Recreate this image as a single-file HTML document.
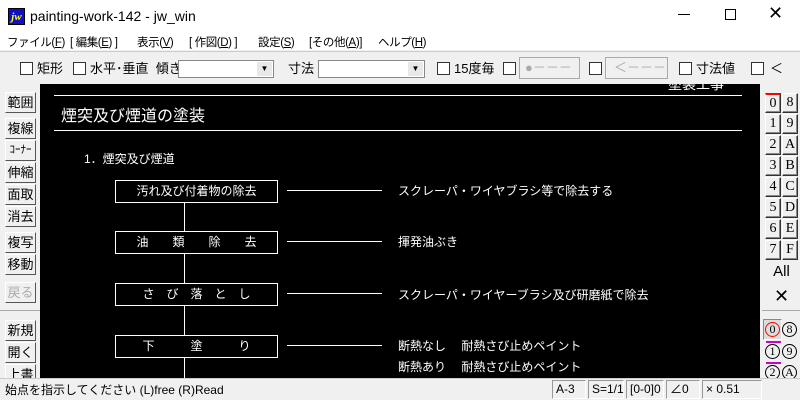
<!DOCTYPE html><html><head><meta charset="utf-8"><style>
*{margin:0;padding:0;box-sizing:border-box}
body{width:800px;height:400px;overflow:hidden;background:#f0f0f0;font-family:"Liberation Sans","Noto Sans CJK JP",sans-serif;font-size:12px;color:#000;position:relative}
.a{position:absolute;white-space:nowrap}
.m{position:absolute;top:34px;font-size:11.5px;letter-spacing:-0.4px;white-space:nowrap}
.cb{position:absolute;width:13px;height:13px;border:1px solid #333;background:#fff;top:62px}
.t{position:absolute;top:58px;font-size:13px;white-space:nowrap}
.btn{position:absolute;left:5px;width:31px;height:21px;background:#f0f0f0;border:1px solid;border-color:#fff #555 #555 #fff;font-size:13px;text-align:center;line-height:19px}
.lb{position:absolute;width:16px;height:20px;background:#f0f0f0;border:1px solid;border-color:#fff #333 #333 #fff;box-shadow:inset -1px -1px #888;font-family:"Liberation Serif",serif;font-size:14px;text-align:center;line-height:18px}
.w{color:#fff;position:absolute;white-space:nowrap}
.bx{position:absolute;left:115px;width:163px;height:23px;border:1px solid #fff;color:#fff;font-size:12px;text-align:center;line-height:21px}
.dl{position:absolute;left:287px;width:95px;height:0;border-top:1px solid #fff}
.ar{position:absolute;left:184px;width:1px;background:#fff}
.sb{position:absolute;top:380px;height:19px;border:1px solid;border-color:#999 #fff #fff #999;font-size:12px;line-height:17px;padding-left:3px}
.c{position:absolute;width:15px;height:15px;border:1px solid #000;border-radius:50%;font-family:"Liberation Serif",serif;font-size:12px;text-align:center;line-height:13px}
</style></head><body>
<div class="a" style="left:0;top:0;width:800px;height:32px;background:#fff"></div>
<div class="a" style="left:8px;top:8px;width:17px;height:17px;background:#1010c0;color:#ff0;font:bold italic 11px 'Liberation Serif',serif;line-height:17px;text-align:center;border:1px solid #000">jw</div>
<div class="a" style="left:30px;top:8px;font-size:14px">painting-work-142 - jw_win</div>
<div class="a" style="left:678px;top:14px;width:12px;border-top:1px solid #000"></div>
<div class="a" style="left:725px;top:9px;width:11px;height:11px;border:1px solid #000"></div>
<div class="a" style="left:768px;top:3px;font-size:18px;font-weight:300">✕</div>
<div class="a" style="left:0;top:32px;width:800px;height:18px;background:#fff"></div>
<div class="m" style="left:7px">ファイル(<u>F</u>)</div>
<div class="m" style="left:70px">[ 編集(<u>E</u>) ]</div>
<div class="m" style="left:137px">表示(<u>V</u>)</div>
<div class="m" style="left:189px">[ 作図(<u>D</u>) ]</div>
<div class="m" style="left:258px">設定(<u>S</u>)</div>
<div class="m" style="left:309px">[その他(<u>A</u>)]</div>
<div class="m" style="left:378px">ヘルプ(<u>H</u>)</div>
<div class="a" style="left:0;top:51px;width:800px;border-top:1px solid #ccc"></div>
<div class="cb" style="left:20px"></div><div class="t" style="left:37px">矩形</div>
<div class="cb" style="left:73px"></div><div class="t" style="left:90px">水平･垂直&nbsp;&nbsp;傾き</div>
<div class="a" style="left:178px;top:60px;width:96px;height:18px;background:#fff;border:1px solid #888"></div>
<div class="a" style="left:257px;top:62px;width:15px;height:14px;background:#e8e8e8;font-size:8px;text-align:center;line-height:14px">▼</div>
<div class="t" style="left:288px">寸法</div>
<div class="a" style="left:318px;top:60px;width:107px;height:18px;background:#fff;border:1px solid #888"></div>
<div class="a" style="left:408px;top:62px;width:15px;height:14px;background:#e8e8e8;font-size:8px;text-align:center;line-height:14px">▼</div>
<div class="cb" style="left:437px"></div><div class="t" style="left:454px">15度毎</div>
<div class="cb" style="left:503px"></div>
<div class="a" style="left:519px;top:57px;width:61px;height:22px;border:1px solid #aaa;color:#aaa;font-size:13px;line-height:20px;padding-left:5px">●－－－</div>
<div class="cb" style="left:589px"></div>
<div class="a" style="left:605px;top:57px;width:63px;height:22px;border:1px solid #aaa;color:#aaa;font-size:13px;line-height:20px;padding-left:8px">＜－－－</div>
<div class="cb" style="left:679px"></div><div class="t" style="left:696px">寸法値</div>
<div class="cb" style="left:751px"></div><div class="t" style="left:770px">＜</div>
<div class="a" style="left:40px;top:84px;width:720px;height:294px;background:#000;overflow:hidden">
<div class="w" style="left:628px;top:-10px;font-size:14px">塗装工事</div>
<div class="a" style="left:14px;top:11px;width:688px;border-top:1px solid #fff"></div>
<div class="w" style="left:21px;top:18px;font-size:16px">煙突及び煙道の塗装</div>
<div class="a" style="left:14px;top:46px;width:688px;border-top:1px solid #fff"></div>
<div class="w" style="left:44px;top:66px;font-size:12px">1．煙突及び煙道</div>
</div>
<div class="bx" style="top:180px">汚れ及び付着物の除去</div>
<div class="bx" style="top:231px">油　　類　　除　　去</div>
<div class="bx" style="top:283px">さ　び　落　と　し</div>
<div class="bx" style="top:335px">下　　　塗　　　り</div>
<div class="ar" style="top:203px;height:28px"></div>
<div class="ar" style="top:254px;height:29px"></div>
<div class="ar" style="top:306px;height:29px"></div>
<div class="ar" style="top:358px;height:20px"></div>
<div class="dl" style="top:190px"></div><div class="dl" style="top:241px"></div><div class="dl" style="top:293px"></div><div class="dl" style="top:345px"></div>
<div class="w" style="left:398px;top:182px">スクレーパ・ワイヤブラシ等で除去する</div>
<div class="w" style="left:398px;top:233px">揮発油ぶき</div>
<div class="w" style="left:398px;top:286px">スクレーパ・ワイヤーブラシ及び研磨紙で除去</div>
<div class="w" style="left:398px;top:337px">断熱なし　 耐熱さび止めペイント</div>
<div class="w" style="left:398px;top:358px">断熱あり　 耐熱さび止めペイント</div>
<div class="btn" style="top:92px">範囲</div>
<div class="btn" style="top:118px">複線</div>
<div class="btn" style="top:140px;font-size:11px">ｺｰﾅｰ</div>
<div class="btn" style="top:162px">伸縮</div>
<div class="btn" style="top:184px">面取</div>
<div class="btn" style="top:206px">消去</div>
<div class="btn" style="top:232px">複写</div>
<div class="btn" style="top:254px">移動</div>
<div class="btn" style="top:282px;color:#aaa">戻る</div>
<div class="a" style="left:0;top:310px;width:40px;border-top:1px solid #aaa"></div>
<div class="btn" style="top:320px">新規</div>
<div class="btn" style="top:342px">開く</div>
<div class="btn" style="top:364px">上書</div>
<div class="lb" style="left:765px;top:93px;border-top:2px solid #f00">0</div><div class="lb" style="left:782px;top:93px">8</div>
<div class="lb" style="left:765px;top:114px">1</div><div class="lb" style="left:782px;top:114px">9</div>
<div class="lb" style="left:765px;top:135px">2</div><div class="lb" style="left:782px;top:135px">A</div>
<div class="lb" style="left:765px;top:156px">3</div><div class="lb" style="left:782px;top:156px">B</div>
<div class="lb" style="left:765px;top:177px">4</div><div class="lb" style="left:782px;top:177px">C</div>
<div class="lb" style="left:765px;top:198px">5</div><div class="lb" style="left:782px;top:198px">D</div>
<div class="lb" style="left:765px;top:219px">6</div><div class="lb" style="left:782px;top:219px">E</div>
<div class="lb" style="left:765px;top:240px">7</div><div class="lb" style="left:782px;top:240px">F</div>
<div class="a" style="left:769px;top:262px;width:25px;height:20px;text-align:center;font-size:15px;line-height:20px">All</div>
<div class="a" style="left:769px;top:286px;width:25px;height:20px;text-align:center;font-size:18px;line-height:20px;font-weight:300">✕</div>
<div class="a" style="left:762px;top:310px;width:38px;border-top:1px solid #aaa"></div>
<div class="a" style="left:763px;top:319px;width:19px;height:21px;background:#ddd;border:1px solid;border-color:#888 #fff #fff #888"></div>
<div class="c" style="left:765px;top:322px;border-color:#f00">0</div><div class="c" style="left:782px;top:322px">8</div>
<div class="c" style="left:765px;top:344px">1</div><div class="c" style="left:782px;top:344px">9</div>
<div class="c" style="left:765px;top:365px">2</div><div class="c" style="left:782px;top:365px">A</div>
<div class="a" style="left:766px;top:341px;width:15px;border-top:2px solid #c0c"></div>
<div class="a" style="left:766px;top:362px;width:15px;border-top:2px solid #c0c"></div>
<div class="a" style="left:0;top:378px;width:800px;height:22px;background:#f0f0f0;border-top:1px solid #ccc"></div>
<div class="a" style="left:5px;top:381px;font-size:12px">始点を指示してください (L)free (R)Read</div>
<div class="sb" style="left:552px;width:34px">A-3</div>
<div class="sb" style="left:588px;width:36px">S=1/1</div>
<div class="sb" style="left:626px;width:38px">[0-0]0</div>
<div class="sb" style="left:666px;width:34px">∠0</div>
<div class="sb" style="left:702px;width:60px">× 0.51</div>
</body></html>
